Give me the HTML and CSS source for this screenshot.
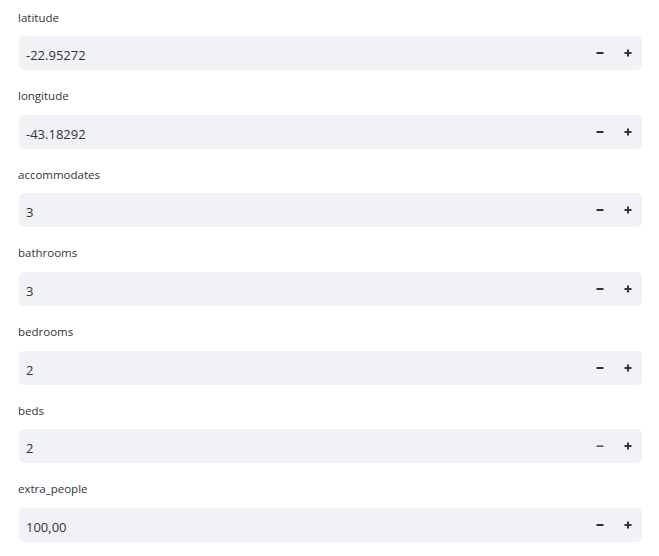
FILE: index.html
```html
<!DOCTYPE html>
<html lang="en">
<head>
    <meta charset="UTF-8">
    <meta name="viewport" content="width=device-width, initial-scale=1.0">
    <title>Number inputs</title>
    <link rel="stylesheet" href="styles.css">
</head>
<body>

<main class="form">
    <div class="field">
        <label class="field-label">latitude</label>
        <div class="number-input">
            <span class="value">-22.95272</span>
            <button class="step" aria-label="decrement"><svg width="8" height="8" viewBox="0 0 8 8"><rect x="0.5" y="3" width="7" height="2"/></svg></button>
            <button class="step" aria-label="increment"><svg width="8" height="8" viewBox="0 0 8 8"><rect x="0.5" y="3" width="7" height="2"/><rect x="3" y="0.5" width="2" height="7"/></svg></button>
        </div>
    </div>

    <div class="field">
        <label class="field-label">longitude</label>
        <div class="number-input">
            <span class="value">-43.18292</span>
            <button class="step" aria-label="decrement"><svg width="8" height="8" viewBox="0 0 8 8"><rect x="0.5" y="3" width="7" height="2"/></svg></button>
            <button class="step" aria-label="increment"><svg width="8" height="8" viewBox="0 0 8 8"><rect x="0.5" y="3" width="7" height="2"/><rect x="3" y="0.5" width="2" height="7"/></svg></button>
        </div>
    </div>

    <div class="field">
        <label class="field-label">accommodates</label>
        <div class="number-input">
            <span class="value">3</span>
            <button class="step" aria-label="decrement"><svg width="8" height="8" viewBox="0 0 8 8"><rect x="0.5" y="3" width="7" height="2"/></svg></button>
            <button class="step" aria-label="increment"><svg width="8" height="8" viewBox="0 0 8 8"><rect x="0.5" y="3" width="7" height="2"/><rect x="3" y="0.5" width="2" height="7"/></svg></button>
        </div>
    </div>

    <div class="field">
        <label class="field-label">bathrooms</label>
        <div class="number-input">
            <span class="value">3</span>
            <button class="step" aria-label="decrement"><svg width="8" height="8" viewBox="0 0 8 8"><rect x="0.5" y="3" width="7" height="2"/></svg></button>
            <button class="step" aria-label="increment"><svg width="8" height="8" viewBox="0 0 8 8"><rect x="0.5" y="3" width="7" height="2"/><rect x="3" y="0.5" width="2" height="7"/></svg></button>
        </div>
    </div>

    <div class="field">
        <label class="field-label">bedrooms</label>
        <div class="number-input">
            <span class="value">2</span>
            <button class="step" aria-label="decrement"><svg width="8" height="8" viewBox="0 0 8 8"><rect x="0.5" y="3" width="7" height="2"/></svg></button>
            <button class="step" aria-label="increment"><svg width="8" height="8" viewBox="0 0 8 8"><rect x="0.5" y="3" width="7" height="2"/><rect x="3" y="0.5" width="2" height="7"/></svg></button>
        </div>
    </div>

    <div class="field">
        <label class="field-label">beds</label>
        <div class="number-input">
            <span class="value">2</span>
            <button class="step" aria-label="decrement"><svg width="8" height="8" viewBox="0 0 8 8"><rect x="0.5" y="3.5" width="7" height="1.3"/></svg></button>
            <button class="step" aria-label="increment"><svg width="8" height="8" viewBox="0 0 8 8"><rect x="0.5" y="3" width="7" height="2"/><rect x="3" y="0.5" width="2" height="7"/></svg></button>
        </div>
    </div>

    <div class="field">
        <label class="field-label">extra_people</label>
        <div class="number-input">
            <span class="value">100,00</span>
            <button class="step" aria-label="decrement"><svg width="8" height="8" viewBox="0 0 8 8"><rect x="0.5" y="3" width="7" height="2"/></svg></button>
            <button class="step" aria-label="increment"><svg width="8" height="8" viewBox="0 0 8 8"><rect x="0.5" y="3" width="7" height="2"/><rect x="3" y="0.5" width="2" height="7"/></svg></button>
        </div>
    </div>
</main>

</body>
</html>
```

FILE: styles.css
```css
body {
    font-family: "Open Sans", Arial, sans-serif;
    background-color: #fff;
    color: #31333f;
    margin: 0;
    padding: 0;
}
.form {
    display: flex;
    flex-direction: column;
    gap: 18.17px;
    padding: 9.5px 17px 0 19px;
}
.field {
    display: flex;
    flex-direction: column;
}
.field-label {
    font-size: 11.5px;
    line-height: 16px;
    margin-left: -1px;
    margin-bottom: 10.5px;
}
.number-input {
    display: flex;
    align-items: center;
    height: 34px;
    background-color: #f0f2f6;
    border-radius: 5px;
}
.value {
    flex: 1;
    font-size: 13px;
    line-height: 30px;
    padding: 4px 0 0 7px;
    box-sizing: border-box;
    height: 34px;
}
.step {
    width: 28px;
    height: 34px;
    display: flex;
    align-items: center;
    justify-content: center;
    padding: 0;
    background: none;
    border: none;
    fill: #31333f;
    cursor: pointer;
}
```
